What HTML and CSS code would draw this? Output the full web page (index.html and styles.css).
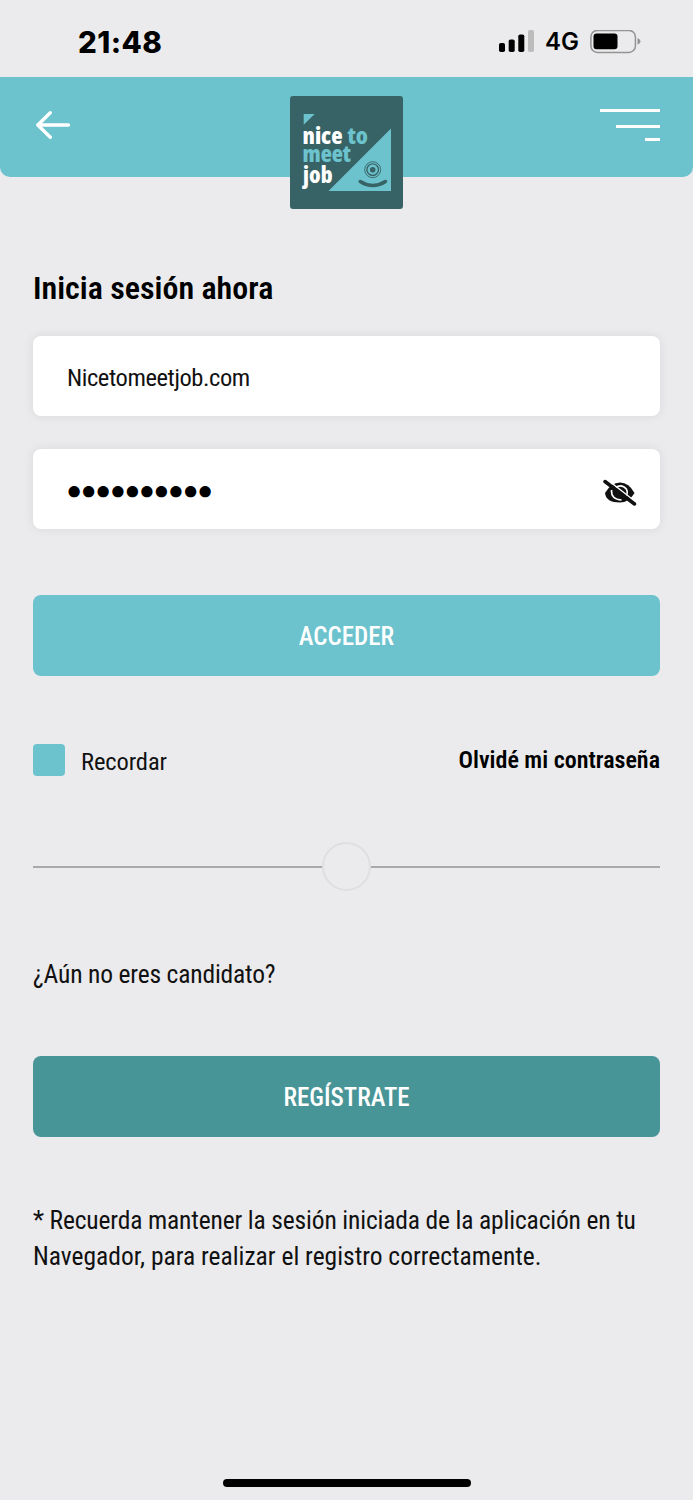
FILE: index.html
```
<!DOCTYPE html>
<html lang="es">
	<head>
		<meta charset="UTF-8">
		<title>Nice to meet job</title>
		<link rel="stylesheet" href="styles.css">
	</head>
	
	<body>
		<div class="status">
			<span class="time">21:48</span>
			<svg class="signal" width="36" height="24" viewBox="0 0 36 24">
				<rect x="0" y="13" width="6" height="9" rx="1.8"/>
				<rect x="9.7" y="9.5" width="6" height="12.5" rx="1.8"/>
				<rect x="19.3" y="4.5" width="6" height="17.5" rx="1.8"/>
				<rect x="29" y="0" width="6" height="22" rx="1.8" fill="#bcbcbd"/>
			</svg>
			<span class="network">4G</span>
			<svg class="battery" width="52" height="24" viewBox="0 0 52 24">
				<rect x="0.9" y="0.4" width="44.5" height="22" rx="6.5" fill="none" stroke="#939394" stroke-width="1.5"/>
				<rect x="3.5" y="3.5" width="24" height="15.8" rx="3"/>
				<path d="M47.5 8 Q50.5 9.5 50.5 11.4 Q50.5 13.3 47.5 14.8 Z" fill="#939394"/>
			</svg>
		</div>
		
		<header>
			<svg class="back" width="36" height="30" viewBox="0 0 36 30">
				<path d="M32.5 15 H1.8 M14.3 2.8 L1.8 15 L14.3 27.2" fill="none" stroke="#fff" stroke-width="3.4" stroke-linecap="round" stroke-linejoin="round"/>
			</svg>
			<svg class="logo" width="113" height="113" viewBox="0 0 113 113">
				<rect width="113" height="113" rx="3" fill="#386366"/>
				<path d="M13.7 18 H24.7 L13.7 28.8 Z M101 32.5 V95 H38.5 Z" fill="#6cc3cd"/>
				<g class="logotext">
					<text x="12.5" y="47.6" textLength="40" lengthAdjust="spacingAndGlyphs" fill="#fff">nice</text>
					<text x="57.5" y="47.6" textLength="20.5" lengthAdjust="spacingAndGlyphs" fill="#6cc3cd">to</text>
					<text x="12.5" y="66" textLength="48.5" lengthAdjust="spacingAndGlyphs" fill="#6cc3cd">meet</text>
					<text x="13" y="86.7" textLength="29.5" lengthAdjust="spacingAndGlyphs" fill="#fff">job</text>
				</g>
				<g fill="none" stroke="#386366">
					<circle cx="82.7" cy="73.7" r="8" stroke-width="0.9"/>
					<circle cx="82.7" cy="73.7" r="5.8" stroke-width="1.4"/>
					<path d="M70.2 85.5 Q82.7 93.5 95.5 85.5" stroke-width="3.5" stroke-linecap="round"/>
				</g>
				<circle cx="82.7" cy="73.7" r="2.8" fill="#386366"/>
			</svg>
			<div class="menu">
				<div></div>
				<div></div>
				<div></div>
			</div>
		</header>
		
		<main>
			<h1><span class="text">Inicia sesión ahora</span></h1>
			<div class="field"><span class="text email">Nicetomeetjob.com</span></div>
			<div class="field">
				<span class="password">••••••••••</span>
				<svg class="eye" width="34" height="28" viewBox="0 0 34 28">
					<path d="M2 14 Q8 3.5 17 3.5 Q26 3.5 31.5 14 Q26 23.5 17 23.5 Q3 23.5 2 14 Z" fill="#111"/>
					<path d="M12.5 8.5 Q19 4.5 23.3 10 Q25.5 14 22.5 18.5" fill="none" stroke="#fff" stroke-width="1.6"/>
					<path d="M8.5 11 Q8 20.5 18.5 21" fill="none" stroke="#fff" stroke-width="1.6"/>
					<path d="M4 0.5 L34 24" stroke="#fff" stroke-width="1.5"/>
					<path d="M2 2.5 L31.5 25" stroke="#111" stroke-width="3.5" stroke-linecap="round"/>
				</svg>
			</div>
			<div class="button login"><span class="text">ACCEDER</span></div>
			<div class="options">
				<div class="checkbox"></div>
				<span class="text remember">Recordar</span>
				<span class="text forgot">Olvidé mi contraseña</span>
			</div>
			<div class="divider"><div class="circle"></div></div>
			<p class="question"><span class="text">¿Aún no eres candidato?</span></p>
			<div class="button register"><span class="text">REGÍSTRATE</span></div>
			<p class="note">
				<span class="text first">* Recuerda mantener la sesión iniciada de la aplicación en tu</span><br>
				<span class="text">Navegador, para realizar el registro correctamente.</span>
			</p>
		</main>
		
		<div class="homebar"></div>
	</body>
</html>
```

FILE: styles.css
```
html, body, h1, p {
	margin: 0;
	padding: 0;
}
body {
	display: flex;
	flex-direction: column;
	height: 1500px;
	overflow: hidden;
	background: #ebebed;
	color: #111;
	font-family: Roboto, "Liberation Sans", sans-serif;
	font-stretch: 75%;
}
.text {
	display: inline-block;
	white-space: nowrap;
}

.status {
	display: flex;
	box-sizing: border-box;
	height: 76.5px;
	padding: 30px 51.5px 0 78px;
	color: #000;
	font-family: Inter, sans-serif;
	line-height: 24px;
}
.time {
	margin-right: auto;
	font-size: 29.5px;
	font-weight: 800;
	letter-spacing: 0.4px;
}
.network {
	margin: 0 10.5px 0 10.5px;
	font-size: 24px;
	font-weight: 600;
}

header {
	display: flex;
	justify-content: space-between;
	box-sizing: border-box;
	height: 100.5px;
	padding: 19.5px 33px 0 36px;
	border-radius: 0 0 10px 10px;
	background: #6cc3cd;
}
.back {
	margin-top: 14px;
	margin-right: 21px;
}
.logotext {
	font-family: "Open Sans", sans-serif;
	font-size: 22.5px;
	font-weight: 800;
}
.menu {
	display: flex;
	flex-direction: column;
	align-items: flex-end;
	padding-top: 13px;
}
.menu div {
	width: 60px;
	height: 3px;
	margin-bottom: 13px;
	background: #fff;
}
.menu div:nth-child(2) {
	width: 44px;
	margin-bottom: 10px;
}
.menu div:nth-child(3) {
	width: 15px;
}

main {
	flex: 1;
	padding: 91px 33px 0;
}
h1 {
	height: 40px;
	margin-bottom: 28px;
	color: #000;
	font-size: 32px;
	font-weight: 600;
	line-height: 40px;
}
.field {
	display: flex;
	align-items: center;
	justify-content: space-between;
	box-sizing: border-box;
	height: 80px;
	margin-bottom: 33px;
	padding: 2px 23px 0 34px;
	border-radius: 8px;
	background: #fff;
	box-shadow: 0 0 10px rgba(90, 90, 120, 0.12);
	font-size: 24.5px;
}
.email {
	letter-spacing: -0.42px;
}
.password {
	margin-top: -2px;
	margin-left: -3px;
	color: #000;
	font-family: Inter, sans-serif;
	font-size: 36px;
	letter-spacing: -5.7px;
}
.eye {
	margin-top: 5px;
}
.button {
	display: flex;
	align-items: center;
	justify-content: center;
	box-sizing: border-box;
	height: 81px;
	padding-top: 2px;
	border-radius: 8px;
	color: #fff;
	font-size: 25px;
	font-weight: 550;
}
.login {
	margin-top: 66px;
	background: #6cc3cd;
}
.register {
	background: #489598;
}
.options {
	display: flex;
	align-items: center;
	height: 32px;
	margin-top: 68px;
	font-size: 24.5px;
}
.checkbox {
	width: 32px;
	height: 32px;
	margin-right: 16px;
	border-radius: 4px;
	background: #6cc3cd;
}
.remember {
	padding-top: 2px;
	letter-spacing: -0.1px;
}
.forgot {
	margin-left: auto;
	color: #000;
	font-size: 24px;
	font-weight: 600;
}
.divider {
	display: flex;
	align-items: center;
	justify-content: center;
	height: 49px;
	margin-top: 66px;
	background: linear-gradient(#a9a9ab, #a9a9ab) center / 100% 2px no-repeat;
}
.circle {
	box-sizing: border-box;
	width: 49px;
	height: 49px;
	border: 2px solid #dfdfe1;
	border-radius: 50%;
	background: #ebebed;
}
.question, .note {
	font-size: 25.5px;
	line-height: 36px;
}
.question {
	margin: 65px 0 64px;
	letter-spacing: -0.17px;
}
.note {
	margin-top: 65px;
}
.first {
	letter-spacing: -0.15px;
}

.homebar {
	width: 248px;
	height: 8px;
	margin: 0 auto 13px;
	border-radius: 4px;
	background: #000;
}
```
